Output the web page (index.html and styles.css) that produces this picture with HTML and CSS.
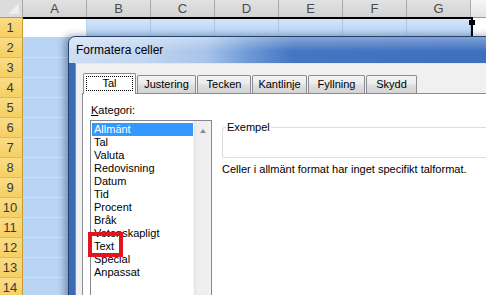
FILE: index.html
```html
<!DOCTYPE html>
<html>
<head>
<meta charset="utf-8">
<link rel="stylesheet" href="styles.css">
</head>
<body>
<div class="sheet">
  <div class="corner"></div>
  <div class="ch">A</div><div class="ch">B</div><div class="ch">C</div><div class="ch">D</div><div class="ch">E</div><div class="ch">F</div><div class="ch">G</div><div class="ch plain"></div>

  <div class="rh">1</div><div class="cell active"></div><div class="cell top"></div><div class="cell top"></div><div class="cell top"></div><div class="cell top"></div><div class="cell top"></div><div class="cell top"></div><div class="cell"></div>
  <div class="rh">2</div><div class="cell sel"></div><div class="cell sel"></div><div class="cell sel"></div><div class="cell sel"></div><div class="cell sel"></div><div class="cell sel"></div><div class="cell sel"></div><div class="cell"></div>
  <div class="rh">3</div><div class="cell sel"></div><div class="cell sel"></div><div class="cell sel"></div><div class="cell sel"></div><div class="cell sel"></div><div class="cell sel"></div><div class="cell sel"></div><div class="cell"></div>
  <div class="rh">4</div><div class="cell sel"></div><div class="cell sel"></div><div class="cell sel"></div><div class="cell sel"></div><div class="cell sel"></div><div class="cell sel"></div><div class="cell sel"></div><div class="cell"></div>
  <div class="rh">5</div><div class="cell sel"></div><div class="cell sel"></div><div class="cell sel"></div><div class="cell sel"></div><div class="cell sel"></div><div class="cell sel"></div><div class="cell sel"></div><div class="cell"></div>
  <div class="rh">6</div><div class="cell sel"></div><div class="cell sel"></div><div class="cell sel"></div><div class="cell sel"></div><div class="cell sel"></div><div class="cell sel"></div><div class="cell sel"></div><div class="cell"></div>
  <div class="rh">7</div><div class="cell sel"></div><div class="cell sel"></div><div class="cell sel"></div><div class="cell sel"></div><div class="cell sel"></div><div class="cell sel"></div><div class="cell sel"></div><div class="cell"></div>
  <div class="rh">8</div><div class="cell sel"></div><div class="cell sel"></div><div class="cell sel"></div><div class="cell sel"></div><div class="cell sel"></div><div class="cell sel"></div><div class="cell sel"></div><div class="cell"></div>
  <div class="rh">9</div><div class="cell sel"></div><div class="cell sel"></div><div class="cell sel"></div><div class="cell sel"></div><div class="cell sel"></div><div class="cell sel"></div><div class="cell sel"></div><div class="cell"></div>
  <div class="rh">10</div><div class="cell sel"></div><div class="cell sel"></div><div class="cell sel"></div><div class="cell sel"></div><div class="cell sel"></div><div class="cell sel"></div><div class="cell sel"></div><div class="cell"></div>
  <div class="rh">11</div><div class="cell sel"></div><div class="cell sel"></div><div class="cell sel"></div><div class="cell sel"></div><div class="cell sel"></div><div class="cell sel"></div><div class="cell sel"></div><div class="cell"></div>
  <div class="rh">12</div><div class="cell sel"></div><div class="cell sel"></div><div class="cell sel"></div><div class="cell sel"></div><div class="cell sel"></div><div class="cell sel"></div><div class="cell sel"></div><div class="cell"></div>
  <div class="rh">13</div><div class="cell sel"></div><div class="cell sel"></div><div class="cell sel"></div><div class="cell sel"></div><div class="cell sel"></div><div class="cell sel"></div><div class="cell sel"></div><div class="cell"></div>
  <div class="rh">14</div><div class="cell sel"></div><div class="cell sel"></div><div class="cell sel"></div><div class="cell sel"></div><div class="cell sel"></div><div class="cell sel"></div><div class="cell sel"></div><div class="cell"></div>
</div>

<div class="selbox"><span class="handle"></span></div>

<div class="dialog">
  <div class="titlebar">Formatera celler</div>
  <div class="dbody">
    <div class="tabs">
      <div class="tab active t-tal"><span class="focus">Tal</span></div>
      <div class="tab t-just">Justering</div>
      <div class="tab t-teck">Tecken</div>
      <div class="tab t-kant">Kantlinje</div>
      <div class="tab t-fyll">Fyllning</div>
      <div class="tab t-skydd">Skydd</div>
    </div>
    <div class="panel">
      <div class="leftcol">
        <div class="label"><u>K</u>ategori:</div>
        <div class="listbox">
          <ul class="items">
            <li class="selected">Allmänt</li>
            <li>Tal</li>
            <li>Valuta</li>
            <li>Redovisning</li>
            <li>Datum</li>
            <li>Tid</li>
            <li>Procent</li>
            <li>Bråk</li>
            <li>Vetenskapligt</li>
            <li>Text</li>
            <li>Special</li>
            <li>Anpassat</li>
          </ul>
          <div class="scroll"><span class="arrow"></span></div>
        </div>
      </div>
      <div class="rightcol">
        <fieldset class="sample"><legend>Exempel</legend></fieldset>
        <p class="desc">Celler i allmänt format har inget specifikt talformat.</p>
      </div>
    </div>
  </div>
</div>

<div class="mark"></div>
</body>
</html>
```

FILE: styles.css
```css
* { box-sizing: border-box; }
html, body {
  margin: 0;
  padding: 0;
}
body {
  width: 486px;
  height: 295px;
  overflow: hidden;
  position: relative;
  background: #fff;
  font-family: "Liberation Sans", Arial, sans-serif;
}

/* ---------- spreadsheet ---------- */
.sheet {
  display: grid;
  grid-template-columns: 23px repeat(8, 64px);
  grid-template-rows: 18px repeat(14, 20px);
}
.corner {
  background: #dcdcdc;
  border-right: 1px solid #a8a8a8;
  border-bottom: 1px solid #9c9c9c;
  position: relative;
}
.corner::after {
  content: "";
  position: absolute;
  right: 3px;
  bottom: 3px;
  border-left: 11px solid transparent;
  border-bottom: 11px solid #eeeeee;
}
.ch {
  background: linear-gradient(#e2e2e2, #d2d2d2);
  border-right: 1px solid #a9a9a9;
  border-bottom: 1px solid #9a9a9a;
  color: #4a4a4a;
  font-size: 13px;
  line-height: 17px;
  text-align: center;
}
.ch.plain {
  background: linear-gradient(#f6f6f6, #e4e4e4);
}
.rh {
  background: linear-gradient(#fbdc86, #f6cf63);
  border-right: 1px solid #c79a33;
  border-bottom: 1px solid #e3b954;
  color: #3a3a3a;
  font-size: 13px;
  line-height: 19px;
  text-align: center;
  padding-right: 2px;
}
.cell {
  background: #fff;
  border-right: 1px solid #dadcdd;
  border-bottom: 1px solid #dadcdd;
}
.cell.active {
  background: #fff;
  border-right: 1px solid #b8d3f3;
  border-bottom: 1px solid #b8d3f3;
}
.cell.top {
  background: linear-gradient(#d3e5fa, #b6d2f3);
  border-right: 1px solid #a9c8ee;
  border-bottom: 1px solid #a9c8ee;
}
.cell.sel {
  background: #b9d5f5;
  border-right: 1px solid #a7c6ec;
  border-bottom: 1px solid #cde0f7;
}

/* selection outline (lies over the cells) */
.selbox {
  position: absolute;
  left: 23px;
  top: 17px;
  width: 450px;
  height: 40px;
  border-top: 2px solid #000;
  border-right: 2px solid #000;
}
.handle {
  position: absolute;
  right: -4px;
  top: 1px;
  width: 6px;
  height: 5px;
  background: #000;
}

/* ---------- dialog ---------- */
.dialog {
  position: absolute;
  left: 68px;
  top: 36px;
  width: 430px;
  height: 270px;
  border: 1px solid #24426e;
  border-radius: 7px 7px 0 0;
  background: linear-gradient(to right, #3d6bb3, #4f80c7 40%, #4a7bc3);
  box-shadow: -3px 0 7px 1px rgba(10, 30, 70, 0.35);
  display: flex;
  flex-direction: column;
}
.titlebar {
  height: 26px;
  flex: none;
  padding-left: 7px;
  font-size: 12px;
  line-height: 27px;
  color: #000;
  border-radius: 6px 6px 0 0;
  background:
    linear-gradient(rgba(255, 255, 255, 0.35), rgba(255, 255, 255, 0) 55%),
    linear-gradient(to right, #cfdff3 0%, #c0d5f0 18%, #a7c3ea 32%, #6e99d6 42%, #4576c2 52%, #3c6fbf 100%);
}
.dbody {
  flex: 1;
  margin-left: 6px;
  background: #f0f0f0;
  border-top: 1px solid #dfe8f4;
  border-left: 1px solid #6f90c4;
  padding: 9px 0 0 6px;
  display: flex;
  flex-direction: column;
  font-size: 11px;
  color: #000;
}
.tabs {
  display: flex;
  align-items: flex-end;
  height: 20px;
  flex: none;
}
.tab {
  height: 18px;
  margin-left: 1px;
  border: 1px solid #898c95;
  border-bottom: none;
  background: linear-gradient(#f4f4f4, #ebebeb 45%, #dedede 55%, #d4d4d4);
  text-align: center;
  line-height: 17px;
  border-radius: 2px 2px 0 0;
}
.tab.active {
  height: 21px;
  margin-bottom: -1px;
  background: #fff;
  position: relative;
  z-index: 1;
  padding-top: 2px;
}
.focus {
  display: block;
  margin: 0 2px;
  height: 15px;
  line-height: 13px;
  border: 1px dotted #000;
}
.t-tal { width: 53px; }
.t-just { width: 59px; }
.t-teck { width: 54px; }
.t-kant { width: 55px; }
.t-fyll { width: 57px; }
.t-skydd { width: 51px; }

.panel {
  flex: 1;
  display: flex;
  background: #fff;
  border-top: 1px solid #898c95;
  border-left: 1px solid #898c95;
  padding-left: 7px;
}
.leftcol {
  width: 122px;
  flex: none;
  padding-top: 10px;
}
.label {
  height: 13px;
  line-height: 13px;
  padding-left: 1px;
}
.label u { text-decoration: underline; }
.listbox {
  margin-top: 3px;
  height: 200px;
  border: 1px solid #828790;
  display: flex;
}
.items {
  list-style: none;
  margin: 0;
  width: 102px;
  padding: 2px 0 0 1px;
}
.items li {
  height: 13px;
  line-height: 13px;
  padding-left: 2px;
}
.items li.selected {
  background: #3399ff;
  color: #fff;
}
.scroll {
  width: 18px;
  background: linear-gradient(to right, #e4e4e4, #eeeeee 3px, #f0f0f0);
  border-left: 1px solid #f7f7f7;
  position: relative;
}
.arrow {
  position: absolute;
  left: 6px;
  top: 8px;
  border-left: 3px solid transparent;
  border-right: 3px solid transparent;
  border-bottom: 4px solid #8a8a8a;
}
.rightcol {
  flex: 1;
  margin-left: 10px;
}
.sample {
  margin: 27px 0 0 0;
  padding: 0;
  height: 37px;
  border: 1px solid #d5dfe5;
  border-radius: 3px;
  border-right: none;
}
.sample legend {
  margin-left: 3px;
  padding: 0 1px;
  font-size: 11px;
  line-height: 13px;
}
.desc {
  margin: 5px 0 0 0;
  line-height: 13px;
}

/* ---------- red highlight box ---------- */
.mark {
  position: absolute;
  left: 88px;
  top: 232px;
  width: 35px;
  height: 25px;
  border: 4px solid #e2141d;
}
```
